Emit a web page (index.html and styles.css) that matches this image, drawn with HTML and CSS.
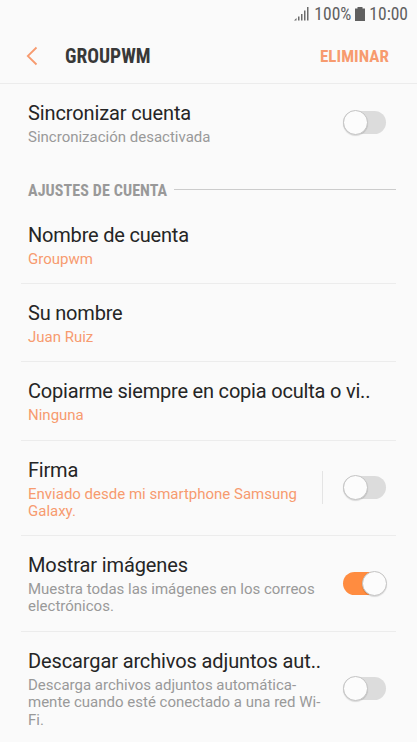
FILE: index.html
```html
<!DOCTYPE html>
<html lang="es">
<head>
<meta charset="utf-8">
<title>GROUPWM</title>
<link rel="stylesheet" href="styles.css">
</head>
<body>
<div class="status">
  <svg class="signal" width="15" height="14" viewBox="0 0 15 14"><path d="M0 13.500L2.500 11v2.500zM4 9.500h1.500v4H4zM7 7h1.500v6.500H7zM10 3.500h1.500v10H10zM13 0h1.500v13.500H13z" fill="#6b6b6b"/></svg>
  <span class="pct">100%</span>
  <svg class="battery" width="10" height="14" viewBox="0 0 10 14"><path d="M2.500 0h5v1.500H10V14H0V1.500h2.500z" fill="#606060"/></svg>
  <span class="time">10:00</span>
</div>
<header class="bar">
  <svg class="back" width="12" height="20" viewBox="0 0 12 20"><path d="M10.500 1.500L1.800 10l8.700 8.500" fill="none" stroke="#f79b6f" stroke-width="1.800"/></svg>
  <h1 class="title">GROUPWM</h1>
  <span class="delete">ELIMINAR</span>
</header>
<main>
  <section class="row sync"><div class="text"><h2>Sincronizar cuenta</h2><p class="gray">Sincronización desactivada</p></div><span class="switch"></span></section>
  <div class="section"><span>AJUSTES DE CUENTA</span></div>
  <section class="row name"><div class="text"><h2>Nombre de cuenta</h2><p>Groupwm</p></div></section>
  <section class="row line"><div class="text"><h2>Su nombre</h2><p>Juan Ruiz</p></div></section>
  <section class="row line copy"><div class="text"><h2>Copiarme siempre en copia oculta o vi..</h2><p>Ninguna</p></div></section>
  <section class="row line sign"><div class="text"><h2>Firma</h2><p>Enviado desde mi smartphone Samsung<br>Galaxy.</p></div><span class="divider"></span><span class="switch"></span></section>
  <section class="row line images"><div class="text"><h2>Mostrar imágenes</h2><p class="gray">Muestra todas las imágenes en los correos<br>electrónicos.</p></div><span class="switch on"></span></section>
  <section class="row line last"><div class="text"><h2>Descargar archivos adjuntos aut..</h2><p class="gray">Descarga archivos adjuntos automática-<br>mente cuando esté conectado a una red Wi-<br>Fi.</p></div><span class="switch"></span></section>
</main>
</body>
</html>
```
FILE: styles.css
```css
*, *::before, *::after { box-sizing: border-box; margin: 0; padding: 0; }
body { width: 417px; height: 742px; overflow: hidden; background: #fafafa; font-family: Roboto, sans-serif; color: #252525; }
svg { display: block; flex: none; }
.status { height: 28px; display: flex; align-items: center; justify-content: flex-end; padding-right: 9px; color: #606060; font-size: 17.5px; font-stretch: 75%; }
.pct { margin-left: 5px; }
.battery { margin: 0 4px 0 4px; }
.bar { height: 56px; display: flex; align-items: center; padding: 0 28px 0 26px; border-bottom: 1px solid #ececec; }
.title { margin-left: 27px; padding-top: 2px; font-size: 19.5px; font-weight: 700; font-stretch: 75%; color: #383838; }
.delete { margin-left: auto; color: #f79b6f; font-size: 17px; font-weight: 700; font-stretch: 75%; letter-spacing: 0.05px; }
.row { height: 78px; margin: 0 21px; padding: 15px 10px 0 7px; display: flex; white-space: nowrap; }
.row.line { border-top: 1px solid #ececec; }
.row.sync { height: 95px; padding-top: 15px; }
.row.name { height: 83px; padding-top: 21px; }
.row.copy { height: 79px; }
.row.sign { height: 95px; }
.row.images { height: 96px; }
.row.last { height: 112px; }
.text { flex: 1; }
h2 { font-size: 20px; line-height: 28px; font-weight: 400; letter-spacing: -0.2px; }
.sync h2, .last h2, .images h2 { letter-spacing: -0.12px; }
p { margin-top: 1.5px; font-size: 15px; line-height: 17.5px; color: #f79b6f; }
p.gray { color: #999; }
.section { display: flex; align-items: center; height: 21px; padding: 0 21px 0 28px; color: #999; font-size: 16px; font-weight: 700; font-stretch: 75%; letter-spacing: 0.1px; }
.section span { padding-top: 2px; }
.section::after { content: ""; flex: 1; height: 1px; margin-left: 7px; background: #ccc; }
.switch { flex: none; width: 43px; height: 23px; border-radius: 12px; background: #dcdcdc; position: relative; }
.switch::before { content: ""; position: absolute; left: 0; top: -1px; width: 25px; height: 25px; border: 1px solid #c4c4c4; border-radius: 50%; background: #fcfcfc; box-shadow: 0 1px 1px #0002; }
.switch.on { background: #ff8c40; }
.switch.on::before { left: 18.500px; }
.sync .switch { margin-top: 12px; }
.sign .switch { margin-top: 20px; }
.images .switch { margin-top: 21px; }
.last .switch { margin-top: 30px; }
.divider { width: 1px; height: 33px; margin: 15px 20px 0 0; background: #e4e4e4; }
```
